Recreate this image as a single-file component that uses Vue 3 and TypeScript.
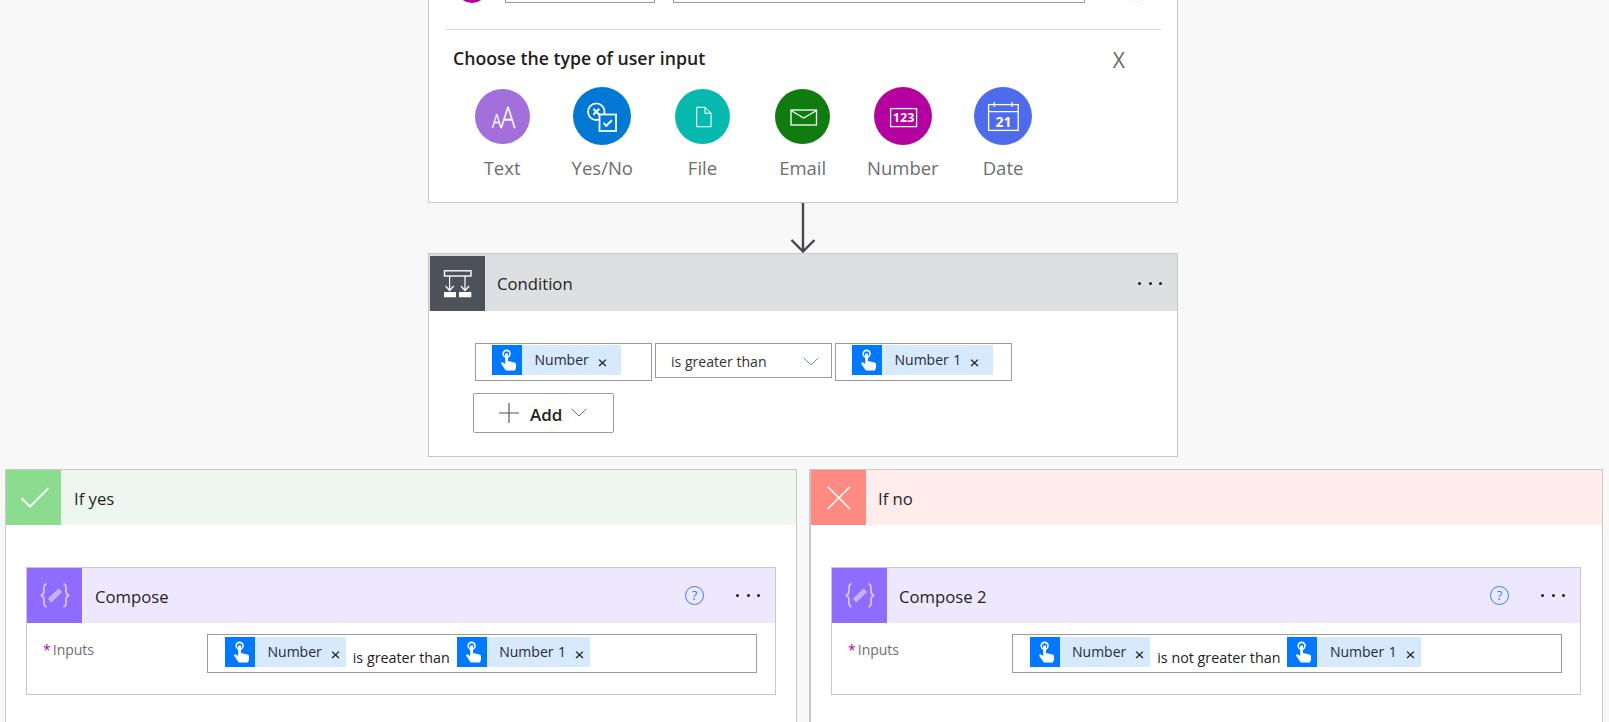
<script setup lang="ts">
const branches = [
  { key: 'yes', title: 'If yes', compose: 'Compose', mid: 'is greater than' },
  { key: 'no', title: 'If no', compose: 'Compose 2', mid: 'is not greater than' },
]
const inputTypes = ['Text', 'Yes/No', 'File', 'Email', 'Number', 'Date']
const bigTypes = ['Yes/No', 'Number', 'Date']
</script>

<template>
  <div class="page">
    <svg class="defs" width="0" height="0" aria-hidden="true">
      <symbol id="hand" viewBox="0 0 30 30">
        <circle cx="14.6" cy="8.8" r="3.4" fill="none" stroke="#fff" stroke-width="1.6" />
        <path d="M13.2 8.5h2.8v7.6l6.4 1.4c1 .3 1.6 1 1.6 2v3.5l-1.2 2.5h-9l-4.5-6.6c-.5-1 .6-2 1.6-1.4l2.3 1.4z" fill="#fff" />
      </symbol>
      <symbol id="close" viewBox="0 0 10 10">
        <path d="M1.2 1.8 8.8 9M8.8 1.8 1.2 9" stroke="#222" stroke-width="1.5" fill="none" />
      </symbol>
      <symbol id="chev" viewBox="0 0 16 9">
        <path d="M.6.8 8 8 15.4.8" stroke="currentColor" stroke-width="1" fill="none" />
      </symbol>
    </svg>

    <div class="flow">
      <section class="card ask">
        <div class="ask-row">
          <span class="dot-pink"></span>
          <span class="ask-box short"></span>
          <span class="ask-box long"></span>
          <span class="ask-more"></span>
        </div>
        <div class="rule"></div>
        <div class="ask-title">
          <span class="choose">Choose the type of user input</span>
          <span class="close-x">X</span>
        </div>
        <div class="types">
          <div v-for="t in inputTypes" :key="t" class="type">
            <div class="type-icon">
              <span class="circle" :class="[`c-${t.slice(0, 3).toLowerCase()}`, { big: bigTypes.includes(t) }]">
                <svg v-if="t === 'Text'" viewBox="0 0 55 55">
                  <text x="0" y="38.8" transform="translate(16.8 0) scale(.78 1)" class="aa-s">A</text>
                  <text x="0" y="38.8" transform="translate(25.4 0) scale(.85 1)" class="aa-b">A</text>
                </svg>
                <svg v-else-if="t === 'Yes/No'" viewBox="0 0 58 58">
                  <circle cx="23.3" cy="24.7" r="8.3" fill="none" stroke="#fff" stroke-width="1.8" />
                  <path d="M20.3 21.7l6 6M26.3 21.7l-6 6" stroke="#fff" stroke-width="2" />
                  <rect x="26.5" y="27.5" width="16.5" height="16.5" fill="#0078d4" stroke="#fff" stroke-width="1.8" />
                  <path d="M30.5 36l2.8 2.8 5.6-5.6" fill="none" stroke="#fff" stroke-width="2" />
                </svg>
                <svg v-else-if="t === 'File'" viewBox="0 0 55 55">
                  <path d="M21.7 18.2h8.3l6 6v13.6H21.7zM30 18.2v6h6" fill="none" stroke="#fff" stroke-width="1.1" />
                </svg>
                <svg v-else-if="t === 'Email'" viewBox="0 0 55 55">
                  <rect x="16" y="21" width="25.5" height="15" fill="none" stroke="#fff" stroke-width="1.3" />
                  <path d="M16 21.5 28.7 29 41.5 21.5" fill="none" stroke="#fff" stroke-width="1.3" />
                </svg>
                <svg v-else-if="t === 'Number'" viewBox="0 0 58 58">
                  <rect x="16.6" y="21.6" width="26" height="18" fill="none" stroke="#fff" stroke-width="1.3" />
                  <text x="29.6" y="35" class="glyph-num">123</text>
                </svg>
                <svg v-else viewBox="0 0 58 58">
                  <rect x="14.6" y="17.6" width="29.6" height="25.8" fill="none" stroke="#fff" stroke-width="1.3" />
                  <path d="M14.6 24.7h29.6M20.3 15v5M38 15v5" stroke="#fff" stroke-width="1.3" />
                  <text x="29.4" y="40" class="glyph-date">21</text>
                </svg>
              </span>
            </div>
            <span class="type-label">{{ t }}</span>
          </div>
        </div>
      </section>

      <div class="arrow">
        <svg width="26" height="50" viewBox="0 0 26 50">
          <path d="M13 0v48M1.5 37 13 48.5 24.5 37" fill="none" stroke="#45474b" stroke-width="2.4" />
        </svg>
      </div>

      <section class="card condition">
        <header class="head head-cond">
          <span class="tile tile-cond">
            <svg viewBox="0 0 55 55">
              <rect x="14.5" y="14.8" width="26.5" height="5.2" fill="none" stroke="#fff" stroke-width="1.4" />
              <path d="M19.6 20v14.5M35 20v14.5M15.5 30l4.1 4.5 4.1-4.5M30.9 30l4.1 4.5 4.1-4.5" fill="none" stroke="#fff" stroke-width="1.2" />
              <path d="M14 36h12v5.2H14zM29 36h12.3v5.2H29z" fill="#fff" />
            </svg>
          </span>
          <span class="head-title">Condition</span>
          <span class="dots"><i></i><i></i><i></i></span>
        </header>
        <div class="cond-body">
          <div class="cond-row">
            <div class="cond-box">
              <span class="token cond-token">
                <span class="token-ic"><svg><use href="#hand" /></svg></span>
                <span class="token-txt">Number</span>
                <svg class="token-x"><use href="#close" /></svg>
              </span>
            </div>
            <div class="cond-select">
              <span>is greater than</span>
              <svg class="sel-chev"><use href="#chev" /></svg>
            </div>
            <div class="cond-box">
              <span class="token cond-token">
                <span class="token-ic"><svg><use href="#hand" /></svg></span>
                <span class="token-txt">Number 1</span>
                <svg class="token-x"><use href="#close" /></svg>
              </span>
            </div>
          </div>
          <button class="add" type="button">
            <svg class="add-plus" viewBox="0 0 20 20"><path d="M10 0v20M0 10h20" stroke="#555" stroke-width="1.2" /></svg>
            <span class="add-txt">Add</span>
            <svg class="add-chev"><use href="#chev" /></svg>
          </button>
        </div>
      </section>
    </div>

    <div class="branches">
      <section v-for="b in branches" :key="b.key" class="branch" :class="`branch-${b.key}`">
        <header class="branch-head">
          <span class="tile branch-tile">
            <svg v-if="b.key === 'yes'" viewBox="0 0 55 55">
              <path d="M15.7 28.3 24 36.7 42.3 18.3" fill="none" stroke="#fff" stroke-width="2" />
            </svg>
            <svg v-else viewBox="0 0 55 55">
              <path d="M16.7 16.7 39 39M39 16.7 16.7 39" fill="none" stroke="#fff" stroke-width="1.6" />
            </svg>
          </span>
          <span class="head-title">{{ b.title }}</span>
        </header>
        <div class="branch-body">
          <div class="card compose">
            <header class="head head-compose">
              <span class="tile tile-compose">
                <svg viewBox="0 0 55 55">
                  <path d="M19.6 15.8c-3.5.3-2.6 4-2.6 6.6 0 2.6-.8 4.4-3.2 4.9 2.4.5 3.2 2.3 3.2 4.9 0 2.6-.9 6.3 2.6 6.6M36.4 15.8c3.5.3 2.6 4 2.6 6.6 0 2.6.8 4.4 3.2 4.9-2.4.5-3.2 2.3-3.2 4.9 0 2.6.9 6.3-2.6 6.6" fill="none" stroke="#d6c9ff" stroke-width="1.7" />
                  <path d="M22.6 32.6 33.4 22.2" stroke="#c5b4ff" stroke-width="5" />
                </svg>
              </span>
              <span class="head-title">{{ b.compose }}</span>
              <span class="help">?</span>
              <span class="dots"><i></i><i></i><i></i></span>
            </header>
            <div class="compose-body">
              <div class="field-label"><span class="req">*</span>Inputs</div>
              <div class="field">
                <span class="token">
                  <span class="token-ic"><svg><use href="#hand" /></svg></span>
                  <span class="token-txt">Number</span>
                  <svg class="token-x"><use href="#close" /></svg>
                </span>
                <span class="mid">{{ b.mid }}</span>
                <span class="token">
                  <span class="token-ic"><svg><use href="#hand" /></svg></span>
                  <span class="token-txt">Number 1</span>
                  <svg class="token-x"><use href="#close" /></svg>
                </span>
              </div>
            </div>
          </div>
        </div>
      </section>
    </div>
  </div>
</template>

<style>
html, body { margin: 0; background: #f8f8f8; overflow: hidden; }
</style>

<style scoped>
.page {
  width: 1609px;
  height: 722px;
  overflow: hidden;
  background: #f8f8f8;
  font-family: "Open Sans", "Noto Sans", sans-serif;
  color: #1f1f1f;
  position: relative;
}
.defs { position: absolute; }
.flow { width: 750px; margin-left: 428px; margin-top: -20px; }
.card { background: #fff; border: 1px solid #c8c8c8; box-sizing: border-box; }

.ask { height: 223px; }
.ask-row { height: 22px; display: flex; align-items: flex-end; }
.dot-pink { width: 32px; height: 32px; border-radius: 50%; background: #b4009e; margin-left: 27px; flex: none; }
.ask-box { height: 30px; box-sizing: border-box; border: 1px solid #9b9b9b; background: #fff; flex: none; }
.short { width: 150px; margin-left: 17px; }
.long { width: 412px; margin-left: 18px; }
.ask-more { width: 30px; height: 30px; border-radius: 50%; background: #fff; border: 1px solid #f0f0f0; box-sizing: border-box; margin-left: 35px; flex: none; }
.rule { height: 1px; background: #d8d8d8; margin: 26px 16px 0 17px; }
.ask-title { display: flex; justify-content: space-between; padding: 14px 52px 0 24px; height: 57px; box-sizing: border-box; }
.choose { font-size: 17.7px; font-weight: 600; line-height: 28px; color: #1d1d1d; }
.close-x { font-size: 21px; line-height: 32px; color: #5d6b6b; }
.types { display: flex; padding-left: 23px; }
.type { width: 100.2px; display: flex; flex-direction: column; align-items: center; flex: none; }
.type-icon { height: 58px; display: flex; align-items: center; justify-content: center; }
.circle { width: 55px; height: 55px; border-radius: 50%; display: block; }
.circle.big { width: 58px; height: 58px; }
.circle svg { width: 100%; height: 100%; display: block; }
.c-tex { background: #a26fdb; }
.c-yes { background: #0078d4; }
.c-fil { background: #05b9ae; }
.c-ema { background: #107c10; }
.c-num { background: #b4009e; }
.c-dat { background: #4f6bed; }
.type-label { font-size: 18.5px; line-height: 26px; margin-top: 10px; color: #6d6d6d; white-space: nowrap; }
.aa-s { font-size: 20px; font-weight: 400; fill: #fff; font-family: "Open Sans", sans-serif; }
.aa-b { font-size: 29px; font-weight: 300; fill: #fff; stroke: #fff; stroke-width: .3px; font-family: "Open Sans", sans-serif; }
.glyph-num { font-size: 12.5px; font-weight: 700; fill: #fff; text-anchor: middle; font-family: "Open Sans", sans-serif; }
.glyph-date { font-size: 14px; font-weight: 700; fill: #fff; text-anchor: middle; font-family: "Open Sans", sans-serif; }

.arrow { height: 50px; display: flex; justify-content: center; }
.arrow svg { display: block; }

.condition { height: 204px; }
.head { display: flex; align-items: center; height: 56px; box-sizing: border-box; }
.head-cond { background: #dedfe1; padding: 1px 0 0 1px; height: 57px; }
.head-compose { background: #ede8fe; height: 55px; }
.tile { width: 55px; height: 55px; flex: none; display: block; }
.tile svg { width: 55px; height: 55px; display: block; }
.tile-cond { background: #4d5159; }
.tile-compose { background: #8f6bff; }
.head-title { font-size: 16.7px; margin: 1px 0 0 13px; flex: 1; white-space: nowrap; color: #1f1f1f; }
.head-cond .head-title { margin: 0 0 0 12px; }
.branch-no .head-title { margin-left: 12px; }
.dots { display: flex; gap: 7.5px; flex: none; margin-right: 15px; }
.dots i { width: 3px; height: 3px; border-radius: 50%; background: #1f1f1f; display: block; }

.cond-body { padding: 32px 0 0 46px; }
.cond-row { display: flex; gap: 3px; align-items: flex-start; }
.cond-box { width: 177px; height: 38px; border: 1px solid #9b9b9b; box-sizing: border-box; padding: 1px 0 0 16px; }
.cond-select { width: 177px; height: 35px; border: 1px solid #9b9b9b; box-sizing: border-box; display: flex; align-items: center; justify-content: space-between; padding: 1px 12px 0 15px; font-size: 14.1px; color: #333; }
.sel-chev { width: 16px; height: 9px; color: #6f8b9c; }
.add { width: 141px; height: 40px; margin: 12px 0 0 -2px; background: #fff; border: 1px solid #9b9b9b; border-radius: 2px; display: flex; align-items: center; padding: 0 0 0 25px; box-sizing: border-box; font: 600 17px "Open Sans", sans-serif; color: #1f1f1f; }
.add-txt { margin-top: 3px; }
.add-plus { width: 20px; height: 20px; flex: none; margin-right: 11px; }
.add-chev { width: 16px; height: 9px; margin: -2px 0 0 9px; color: #666; }

.token { display: inline-flex; align-items: center; height: 30px; background: #d7e9fd; padding-right: 6px; flex: none; }
.cond-token { padding-right: 14px; }
.token-ic { width: 30px; height: 30px; background: #0078ff; display: block; flex: none; }
.token-ic svg { width: 30px; height: 30px; display: block; }
.token-txt { font-size: 14px; margin-left: 12.5px; word-spacing: 1px; color: #1f2b3a; white-space: nowrap; line-height: 30px; }
.token-x { width: 9px; height: 9px; margin: 5px 0 0 9px; flex: none; }

.branches { display: grid; grid-template-columns: 792px 794px; gap: 12px; margin: 12px 0 0 5px; }
.branch { background: #fff; border: 1px solid #c8c8c8; border-bottom: 0; height: 260px; box-sizing: border-box; }
.branch-no { border-left-width: 2px; }
.branch-head { display: flex; align-items: center; height: 55px; }
.branch-yes .branch-head { background: #edf7ef; }
.branch-no .branch-head { background: #ffeceb; }
.branch-yes .branch-tile { background: #8bdc8e; }
.branch-no .branch-tile { background: #ff8a82; }
.branch-body { padding: 42px 0 0 20px; }
.compose { width: 750px; height: 128px; }
.compose-body { display: flex; padding: 11px 0 0 16px; }
.field-label { width: 164px; font-size: 14px; color: #6d6d6d; line-height: 32px; flex: none; height: 32px; white-space: nowrap; }
.req { color: #b4009e; margin: 0 2px 0 0; }
.field { width: 550px; height: 39px; box-sizing: border-box; border: 1px solid #9b9b9b; display: flex; align-items: flex-start; padding: 2px 0 0 17px; }
.branch-no .field { padding-left: 16.5px; }
.mid { font-size: 14.3px; line-height: 30px; margin: 6px 7px 0 7px; color: #222; white-space: nowrap; }
.help { width: 19px; height: 19px; box-sizing: border-box; border: 1.2px solid #3a7bff; border-radius: 50%; color: #3a7bff; font-size: 13px; line-height: 16px; text-align: center; flex: none; margin-right: 32px; }
</style>
